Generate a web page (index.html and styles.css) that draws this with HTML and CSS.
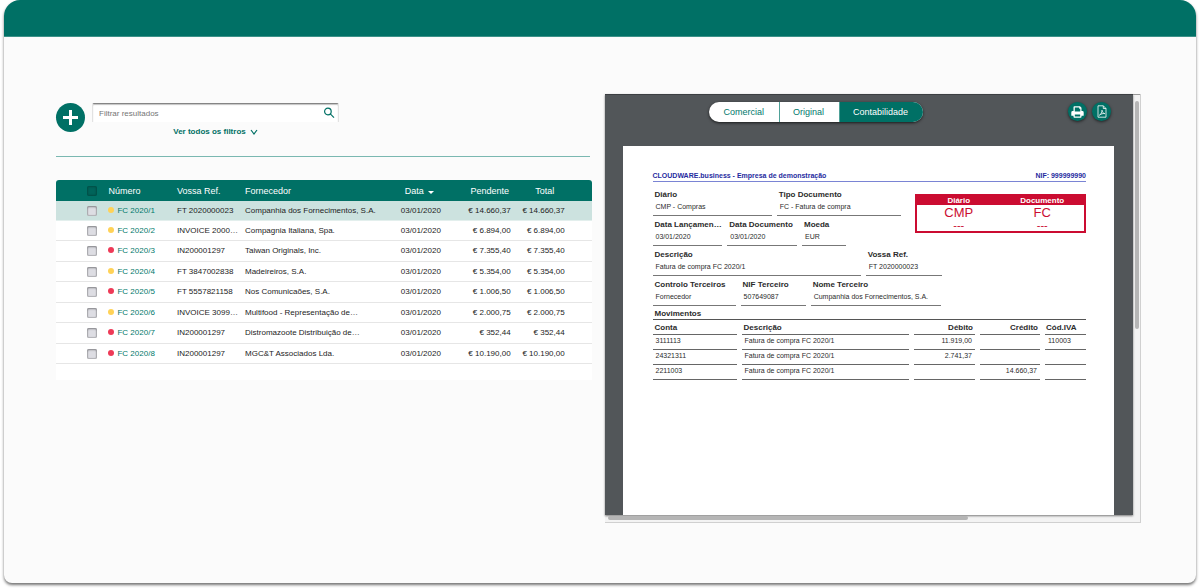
FILE: index.html
```html
<!DOCTYPE html>
<html lang="pt">
<head>
  <meta charset="UTF-8">
  <meta name="viewport" content="width=device-width, initial-scale=1.0">
  <title>Compras</title>
  <link rel="stylesheet" href="styles.css">
</head>
<body>
<div class="window">
  <header class="topbar"></header>
  <main class="content">

    <!-- Purchases list -->
    <section class="list">
      <div class="toolbar">
        <button class="add-btn" title="Adicionar">
          <svg viewBox="0 0 29 29"><path d="M14.5 7v15M7 14.5h15"/></svg>
        </button>
        <form class="filter">
          <div class="search">
            <input type="text" placeholder="Filtrar resultados" aria-label="Filtrar resultados">
            <button type="button" class="search-btn" title="Procurar">
              <svg viewBox="0 0 12 12"><circle cx="4.9" cy="4.5" r="3.3"/><path d="M7.3 6.900l3.700 3.700"/></svg>
            </button>
          </div>
          <button type="button" class="more-filters">Ver todos os filtros
            <svg viewBox="0 0 8 6"><path d="M1 1l3 4 3-4"/></svg>
          </button>
        </form>
      </div>

      <div class="table-box">
        <table class="purchases">
          <colgroup>
            <col class="c-check"><col class="c-number"><col class="c-ref"><col class="c-supplier">
            <col class="c-date"><col class="c-pending"><col class="c-total"><col class="c-end">
          </colgroup>
          <thead>
            <tr>
              <th class="check"><input type="checkbox" aria-label="Selecionar todos"></th>
              <th>Número</th>
              <th>Vossa Ref.</th>
              <th>Fornecedor</th>
              <th class="date">Data <span class="sort"></span></th>
              <th class="sum">Pendente</th>
              <th class="sum">Total</th>
              <th></th>
            </tr>
          </thead>
          <tbody>
            <tr class="selected">
              <td class="check"><input type="checkbox" aria-label="FC 2020/1"></td>
              <td><span class="dot yellow"></span><a href="#">FC 2020/1</a></td>
              <td>FT 2020000023</td>
              <td>Companhia dos Fornecimentos, S.A.</td>
              <td>03/01/2020</td>
              <td class="num">€ 14.660,37</td>
              <td class="num">€ 14.660,37</td>
              <td></td>
            </tr>
            <tr>
              <td class="check"><input type="checkbox" aria-label="FC 2020/2"></td>
              <td><span class="dot yellow"></span><a href="#">FC 2020/2</a></td>
              <td>INVOICE 2000…</td>
              <td>Compagnia Italiana, Spa.</td>
              <td>03/01/2020</td>
              <td class="num">€ 6.894,00</td>
              <td class="num">€ 6.894,00</td>
              <td></td>
            </tr>
            <tr>
              <td class="check"><input type="checkbox" aria-label="FC 2020/3"></td>
              <td><span class="dot red"></span><a href="#">FC 2020/3</a></td>
              <td>IN200001297</td>
              <td>Taiwan Originals, Inc.</td>
              <td>03/01/2020</td>
              <td class="num">€ 7.355,40</td>
              <td class="num">€ 7.355,40</td>
              <td></td>
            </tr>
            <tr>
              <td class="check"><input type="checkbox" aria-label="FC 2020/4"></td>
              <td><span class="dot yellow"></span><a href="#">FC 2020/4</a></td>
              <td>FT 3847002838</td>
              <td>Madeireiros, S.A.</td>
              <td>03/01/2020</td>
              <td class="num">€ 5.354,00</td>
              <td class="num">€ 5.354,00</td>
              <td></td>
            </tr>
            <tr>
              <td class="check"><input type="checkbox" aria-label="FC 2020/5"></td>
              <td><span class="dot red"></span><a href="#">FC 2020/5</a></td>
              <td>FT 5557821158</td>
              <td>Nos Comunicaões, S.A.</td>
              <td>03/01/2020</td>
              <td class="num">€ 1.006,50</td>
              <td class="num">€ 1.006,50</td>
              <td></td>
            </tr>
            <tr>
              <td class="check"><input type="checkbox" aria-label="FC 2020/6"></td>
              <td><span class="dot yellow"></span><a href="#">FC 2020/6</a></td>
              <td>INVOICE 3099…</td>
              <td>Multifood - Representação de…</td>
              <td>03/01/2020</td>
              <td class="num">€ 2.000,75</td>
              <td class="num">€ 2.000,75</td>
              <td></td>
            </tr>
            <tr>
              <td class="check"><input type="checkbox" aria-label="FC 2020/7"></td>
              <td><span class="dot red"></span><a href="#">FC 2020/7</a></td>
              <td>IN200001297</td>
              <td>Distromazoote Distribuição de…</td>
              <td>03/01/2020</td>
              <td class="num">€ 352,44</td>
              <td class="num">€ 352,44</td>
              <td></td>
            </tr>
            <tr>
              <td class="check"><input type="checkbox" aria-label="FC 2020/8"></td>
              <td><span class="dot red"></span><a href="#">FC 2020/8</a></td>
              <td>IN200001297</td>
              <td>MGC&amp;T Associados Lda.</td>
              <td>03/01/2020</td>
              <td class="num">€ 10.190,00</td>
              <td class="num">€ 10.190,00</td>
              <td></td>
            </tr>
          </tbody>
        </table>
      </div>
    </section>

    <!-- Document preview -->
    <section class="viewer">
      <div class="stage">
        <div class="viewer-bar">
          <div class="tabs">
            <button>Comercial</button>
            <button>Original</button>
            <button class="active">Contabilidade</button>
          </div>
          <div class="actions">
            <button class="round-btn" title="Imprimir">
              <svg class="print" viewBox="0 0 13 12">
                <path class="fill" d="M2.500 5V1.200Q2.500.3 3.400.3H9l1.500 1.500V5h.8q1.400 0 1.400 1.400v2.900q0 .5-.5.5H.8q-.5 0-.5-.5V6.400Q.3 5 1.700 5z"/>
                <path class="hole" d="M3.800 1.600h4.400v1.100h1.100v2.700H3.800z"/>
                <path class="fill" d="M2.500 7.800h8v3q0 .9-.9.9H3.400q-.9 0-.9-.9z"/>
                <path class="hole" d="M3.800 8.600h5.400v1.900H3.800z"/>
              </svg>
            </button>
            <button class="round-btn" title="PDF">
              <svg class="pdf" viewBox="0 0 10 13">
                <path d="M1 .8h5.300L9 3.500v8.700H1zM6.300.8v2.700H9"/>
                <path d="M2.400 10.200c1.600-.8 2.700-3 2.600-5 .3 1.700 1.100 3.200 2.800 3.400-1.700-.3-4 .3-5.400 1.600z"/>
              </svg>
            </button>
          </div>
        </div>

        <article class="paper">
          <div class="company">
            <span>CLOUDWARE.business - Empresa de demonstração</span>
            <span>NIF: 999999990</span>
          </div>

          <div class="intro">
            <div class="intro-fields">
              <div class="fields fields-type">
                <div class="field"><b>Diário</b><span>CMP - Compras</span></div>
                <div class="field"><b>Tipo Documento</b><span>FC - Fatura de compra</span></div>
              </div>
              <div class="fields fields-dates">
                <div class="field"><b>Data Lançamen…</b><span>03/01/2020</span></div>
                <div class="field"><b>Data Documento</b><span>03/01/2020</span></div>
                <div class="field"><b>Moeda</b><span>EUR</span></div>
              </div>
            </div>
            <table class="stamp">
              <thead>
                <tr><th>Diário</th><th>Documento</th></tr>
              </thead>
              <tbody>
                <tr><td>CMP</td><td>FC</td></tr>
                <tr class="dashes"><td>---</td><td>---</td></tr>
              </tbody>
            </table>
          </div>

          <div class="fields fields-desc">
            <div class="field"><b>Descrição</b><span>Fatura de compra FC 2020/1</span></div>
            <div class="field"><b>Vossa Ref.</b><span>FT 2020000023</span></div>
          </div>
          <div class="fields fields-third">
            <div class="field"><b>Controlo Terceiros</b><span>Fornecedor</span></div>
            <div class="field"><b>NIF Terceiro</b><span>507649087</span></div>
            <div class="field"><b>Nome Terceiro</b><span>Cumpanhia dos Fornecimentos, S.A.</span></div>
          </div>

          <h2 class="moves-title">Movimentos</h2>
          <div class="moves-box">
            <table class="moves">
              <colgroup>
                <col class="m-account"><col class="m-desc"><col class="m-debit"><col class="m-credit"><col class="m-vat">
              </colgroup>
              <thead>
                <tr><th>Conta</th><th>Descrição</th><th class="num">Débito</th><th class="num">Crédito</th><th class="vat">Cód.IVA</th></tr>
              </thead>
              <tbody>
                <tr><td>3111113</td><td>Fatura de compra FC 2020/1</td><td class="num">11.919,00</td><td></td><td>110003</td></tr>
                <tr><td>24321311</td><td>Fatura de compra FC 2020/1</td><td class="num">2.741,37</td><td></td><td></td></tr>
                <tr><td>2211003</td><td>Fatura de compra FC 2020/1</td><td></td><td class="num">14.660,37</td><td></td></tr>
              </tbody>
            </table>
          </div>
        </article>
      </div>
      <div class="scroll-y"><div class="thumb"></div></div>
      <div class="scroll-x"><div class="thumb"></div></div>
    </section>

  </main>
</div>
</body>
</html>
```

FILE: styles.css
```css
* {
  box-sizing: border-box;
}

body {
  margin: 0;
  padding: 0 4px 5px;
  min-height: 100vh;
  display: flex;
  background: #fff;
  color: #1c1c1c;
  font-family: "Liberation Sans", Arial, sans-serif;
  font-size: 8px;
}

button, input {
  font-family: inherit;
  font-size: inherit;
  margin: 0;
}

button {
  border: none;
  padding: 0;
  background: none;
  color: inherit;
  cursor: pointer;
}

svg {
  display: block;
  fill: none;
  stroke: currentColor;
}

.window {
  flex: 1;
  display: flex;
  flex-direction: column;
  background: #fbfbfb;
  border-radius: 16px 16px 8px 8px;
  box-shadow: 0 2px 3px rgba(0, 0, 0, 0.55);
  overflow: hidden;
}

.topbar {
  height: 37px;
  background: #007065;
  border-bottom: 1px solid #3c9188;
}

.content {
  flex: 1;
  display: flex;
  gap: 13px;
  padding: 57px 55px 60px 52px;
}

.list, .viewer {
  flex: 1 1 0;
  min-width: 0;
}

/* Filter toolbar */
.list {
  padding-top: 9px;
}

.toolbar {
  display: flex;
  gap: 7px;
  height: 54px;
  margin-right: 2px;
  border-bottom: 1px solid #7ab8b1;
}

.add-btn {
  width: 29px;
  height: 29px;
  border-radius: 50%;
  background: #007065;
  color: #fff;
}

.add-btn svg {
  stroke-width: 3;
}

.filter {
  width: 247px;
  display: flex;
  flex-direction: column;
  align-items: center;
  gap: 5px;
}

.search {
  width: 100%;
  height: 19px;
  display: flex;
  align-items: center;
  background: #fff;
  border: 1px solid #e2e2e2;
  border-top: 1px solid #858585;
  border-bottom: none;
  border-radius: 2px 2px 0 0;
  box-shadow: inset 0 1px 1px #c4c4c4;
}

.search input {
  flex: 1;
  min-width: 0;
  padding: 0 6px;
  border: none;
  outline: none;
  background: none;
}

.search input::placeholder {
  color: #757575;
}

.search-btn {
  width: 12px;
  height: 12px;
  margin-right: 3px;
  color: #007065;
}

.search-btn svg {
  stroke-width: 1.2;
}

.more-filters {
  display: flex;
  align-items: center;
  gap: 4px;
  line-height: 10px;
  font-weight: bold;
  color: #007065;
}

.more-filters svg {
  width: 8px;
  height: 6px;
  stroke-width: 1.2;
}

/* Purchases table */
.table-box {
  margin-top: 23px;
  padding-bottom: 16px;
  background: #fff;
  border-radius: 3px 3px 0 0;
  overflow: hidden;
}

.purchases {
  width: 100%;
  table-layout: fixed;
  border-collapse: separate;
  border-spacing: 0;
}

.c-check { width: 9.8%; }
.c-number { width: 12.8%; }
.c-ref { width: 12.7%; }
.c-supplier { width: 29.1%; }
.c-date { width: 10.1%; }
.c-pending { width: 10.4%; }
.c-total { width: 10.1%; }
.c-end { width: 5%; }

.purchases th, .purchases td {
  padding: 0;
  text-align: left;
  white-space: nowrap;
  line-height: 10px;
}

.purchases th {
  height: 21px;
  background: #007065;
  color: #fff;
  font-size: 9px;
  font-weight: normal;
}

.purchases td {
  height: 20px;
  border-bottom: 1px solid #e6e6e6;
}

.purchases tr:nth-child(odd) td {
  height: 21px;
}

.purchases .selected td, .purchases tr.selected:nth-child(odd) td {
  height: 20px;
  background: #cce2df;
  border-bottom-color: #e3efed;
}

.purchases .check {
  padding-left: 31px;
}

.purchases .date {
  padding-left: 4px;
}

.purchases .sum {
  padding-left: 14px;
  text-align: center;
}

.purchases .num, .moves .num {
  text-align: right;
}

.purchases input {
  appearance: none;
  display: block;
  width: 10px;
  height: 10px;
  border-radius: 2px;
  background: #dddde3;
  box-shadow: inset 0 1px 2px #8c8c90, inset 0 0 1px 1px #b4b4b8;
}

.purchases th input {
  background: #00645a;
  box-shadow: inset 0 0 2px 1px #004d45;
}

.purchases a {
  color: #00786b;
  text-decoration: none;
}

.sort {
  display: inline-block;
  margin-left: 2px;
  border: 3px solid transparent;
  border-top-color: #fff;
  border-bottom: none;
}

.dot {
  display: inline-block;
  width: 6px;
  height: 6px;
  margin-right: 3px;
  border-radius: 50%;
}

.yellow { background: #ffd257; }
.red { background: #ee3a57; }

/* Preview frame */
.viewer {
  display: grid;
  grid-template-columns: minmax(0, 1fr) 7px;
  grid-template-rows: 1fr 7px;
  background: #f3f3f3;
  border-right: 1px solid #d0d0d0;
  border-bottom: 1px solid #d0d0d0;
}

.stage {
  display: flex;
  flex-direction: column;
  padding: 0 19px 0 18px;
  background: #525659;
  border-top: 1px solid #3c3f42;
  box-shadow: 0 1px 2px rgba(0, 0, 0, 0.5);
}

.scroll-y {
  padding: 6px 1px 0 2px;
  border-top: 1px solid #999;
}

.scroll-y .thumb {
  height: 55%;
  border-radius: 2px;
  background: #b5b5b5;
}

.scroll-x {
  padding: 1px 3px;
}

.scroll-x .thumb {
  width: 69%;
  height: 4px;
  border-radius: 2px;
  background: #b5b5b5;
}

.viewer-bar {
  display: flex;
  justify-content: space-between;
  height: 51px;
  padding: 7px 3px 0 86px;
}

.tabs {
  display: flex;
  height: 20px;
  border-radius: 10px;
  background: #fff;
  box-shadow: 0 1px 3px rgba(0, 0, 0, 0.7);
  overflow: hidden;
}

.tabs button {
  padding: 0 15px;
  font-size: 9px;
  color: #00786b;
}

.tabs button + button {
  padding-left: 13px;
  border-left: 1px solid #4fa198;
}

.tabs .active {
  background: #007065;
  color: #fff;
}

.actions {
  display: flex;
  gap: 5px;
}

.round-btn {
  display: flex;
  align-items: center;
  justify-content: center;
  width: 19px;
  height: 19px;
  border-radius: 50%;
  background: #007065;
  color: #fff;
  box-shadow: 0 1px 3px rgba(0, 0, 0, 0.6);
}

.print {
  width: 13px;
  height: 12px;
  stroke: none;
}

.print .fill { fill: #fff; }
.print .hole { fill: #007065; }

.pdf {
  width: 10px;
  height: 13px;
  stroke-width: 0.8;
}

/* Accounting document */
.paper {
  flex: 1;
  padding: 24px 28px 24px 30px;
  background: #fff;
  color: #2b2b2b;
  font-size: 7px;
}

.company {
  display: flex;
  justify-content: space-between;
  margin-bottom: 4px;
  border-bottom: 1px solid #7a84d4;
  line-height: 11px;
  font-weight: bold;
  color: #1f2ba0;
}

.intro {
  display: flex;
  align-items: flex-start;
  gap: 14px;
}

.intro-fields {
  flex: 1;
}

.fields {
  display: grid;
  gap: 5px;
}

.fields-type { grid-template-columns: 118fr 123fr; }
.fields-dates { grid-template-columns: 69fr 69fr 44fr 49fr; }
.fields-desc { grid-template-columns: 208fr 76fr 139fr; }
.fields-third { grid-template-columns: 83fr 65fr 130fr 140fr; }

.field {
  display: flex;
  flex-direction: column;
  min-width: 0;
  padding: 3px 0 1px 2px;
  border-bottom: 1px solid #777;
  white-space: nowrap;
}

.field b {
  font-size: 8px;
  line-height: 11px;
}

.field span {
  padding-left: 1px;
  line-height: 14px;
}

.stamp {
  width: 171px;
  margin-top: 8px;
  table-layout: fixed;
  border-collapse: separate;
  border-spacing: 0;
  border: 2px solid #cb0c31;
  color: #cb0c31;
  text-align: center;
}

.stamp th, .stamp td {
  padding: 0;
}

.stamp th {
  background: #cb0c31;
  color: #fff;
  font-size: 8px;
  line-height: 9px;
}

.stamp td {
  font-size: 13px;
  line-height: 15px;
}

.stamp .dashes td {
  font-size: 11px;
  line-height: 11px;
}

.moves-title {
  margin: 0;
  padding: 2px 2px 0;
  border-bottom: 1px solid #555;
  font-size: 8px;
  line-height: 11px;
}

/* pulls the outer cell spacing back to the text edges */
.moves-box {
  margin: 0 -5px;
}

.moves {
  width: 100%;
  table-layout: fixed;
  border-collapse: separate;
  border-spacing: 5px 0;
}

.m-account { width: 84px; }
.m-desc { width: auto; }
.m-debit { width: 61px; }
.m-credit { width: 60px; }
.m-vat { width: 41px; }

.moves th, .moves td {
  height: 15px;
  border-bottom: 1px solid #666;
  line-height: 10px;
  text-align: left;
  white-space: nowrap;
}

.moves th {
  padding: 1px 2px 0;
  font-size: 8px;
}

.moves th.vat {
  padding: 1px 0 0 1px;
}

.moves td {
  padding: 0 3px 2px;
}
```
